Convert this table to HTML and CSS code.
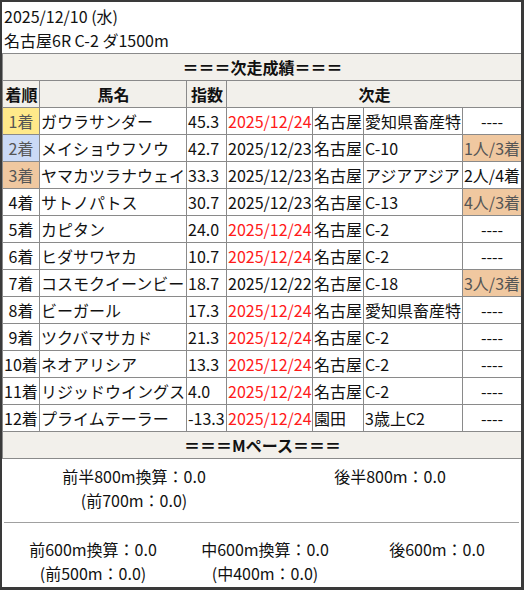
FILE: index.html
```html
<!DOCTYPE html>
<html lang="ja">
<head>
<meta charset="utf-8">
<link rel="stylesheet" href="styles.css">
</head>
<body>
<div class="frame">
  <div class="title">
    <div>2025/12/10 (水)</div>
    <div>名古屋6R C-2 ダ1500m</div>
  </div>
  <table class="res">
    <colgroup>
      <col class="c1"><col class="c2"><col class="c3"><col class="c4"><col class="c5"><col class="c6"><col class="c7">
    </colgroup>
    <tr class="sec"><th colspan="7">＝＝＝次走成績＝＝＝</th></tr>
    <tr class="hd"><th>着順</th><th>馬名</th><th>指数</th><th colspan="4">次走</th></tr>
    <tr><td class="rk p1">1着</td><td>ガウラサンダー</td><td>45.3</td><td class="red">2025/12/24</td><td>名古屋</td><td>愛知県畜産特</td><td class="rs">----</td></tr>
    <tr><td class="rk p2">2着</td><td>メイショウフソウ</td><td>42.7</td><td>2025/12/23</td><td>名古屋</td><td>C-10</td><td class="rs p3">1人/3着</td></tr>
    <tr><td class="rk p3">3着</td><td>ヤマカツラナウェイ</td><td>33.3</td><td>2025/12/23</td><td>名古屋</td><td>アジアアジア</td><td class="rs">2人/4着</td></tr>
    <tr><td class="rk">4着</td><td>サトノパトス</td><td>30.7</td><td>2025/12/23</td><td>名古屋</td><td>C-13</td><td class="rs p3">4人/3着</td></tr>
    <tr><td class="rk">5着</td><td>カピタン</td><td>24.0</td><td class="red">2025/12/24</td><td>名古屋</td><td>C-2</td><td class="rs">----</td></tr>
    <tr><td class="rk">6着</td><td>ヒダサワヤカ</td><td>10.7</td><td class="red">2025/12/24</td><td>名古屋</td><td>C-2</td><td class="rs">----</td></tr>
    <tr><td class="rk">7着</td><td>コスモクイーンビー</td><td>18.7</td><td>2025/12/22</td><td>名古屋</td><td>C-18</td><td class="rs p3">3人/3着</td></tr>
    <tr><td class="rk">8着</td><td>ビーガール</td><td>17.3</td><td class="red">2025/12/24</td><td>名古屋</td><td>愛知県畜産特</td><td class="rs">----</td></tr>
    <tr><td class="rk">9着</td><td>ツクバマサカド</td><td>21.3</td><td class="red">2025/12/24</td><td>名古屋</td><td>C-2</td><td class="rs">----</td></tr>
    <tr><td class="rk">10着</td><td>ネオアリシア</td><td>13.3</td><td class="red">2025/12/24</td><td>名古屋</td><td>C-2</td><td class="rs">----</td></tr>
    <tr><td class="rk">11着</td><td>リジッドウイングス</td><td>4.0</td><td class="red">2025/12/24</td><td>名古屋</td><td>C-2</td><td class="rs">----</td></tr>
    <tr><td class="rk">12着</td><td>プライムテーラー</td><td>-13.3</td><td class="red">2025/12/24</td><td>園田</td><td>3歳上C2</td><td class="rs">----</td></tr>
    <tr class="sec"><th colspan="7">＝＝＝Mペース＝＝＝</th></tr>
  </table>
  <div class="pace">
    <div class="two">
      <div>前半800m換算：0.0<br>(前700m：0.0)</div>
      <div>後半800m：0.0</div>
    </div>
    <div class="rule"></div>
    <div class="three">
      <div>前600m換算：0.0<br>(前500m：0.0)</div>
      <div>中600m換算：0.0<br>(中400m：0.0)</div>
      <div>後600m：0.0</div>
    </div>
  </div>
</div>
</body>
</html>
```
FILE: styles.css
```css
html {
  background: #3a3a3a;
}
body {
  margin: 0;
  font-family: "Noto Sans CJK JP", "Noto Sans", sans-serif;
  font-size: 16px;
  color: #111;
}
.frame {
  margin: 2px 3px 0 2px;
  width: 519px;
  height: 585px;
  background: #fff;
  overflow: hidden;
}
.title {
  padding: 2px 0 1px 2px;
  line-height: 24px;
}
.res {
  border-collapse: collapse;
  table-layout: fixed;
  width: 519px;
}
.c1 { width: 37px; }
.c2 { width: 147px; }
.c3 { width: 40px; }
.c4 { width: 86px; }
.c5 { width: 51px; }
.c6 { width: 99px; }
.c7 { width: 59px; }
.res th, .res td {
  border: 1px solid #8a8a8a;
  padding: 0 0 0 1px;
  height: 26px;
  line-height: 26px;
  white-space: nowrap;
  overflow: hidden;
  text-align: left;
}
.res th {
  font-weight: bold;
  text-align: center;
}
.sec th {
  background: #f2f0eb;
}
.hd th {
  background: #f2f0eb;
}
.res td.rk {
  text-align: center;
  padding: 0;
}
.res td.rs {
  text-align: center;
  padding: 0;
}
.red {
  color: #ff1a1a;
}
.p1 { background: #ffe98a; color: #555; }
.p2 { background: #cbdaf6; color: #555; }
.p3 { background: #f0c8a0; color: #555; }
.pace {
  line-height: 24px;
}
.two {
  display: grid;
  grid-template-columns: 256px 256px;
  padding: 5px 0 0 4px;
  height: 58px;
  text-align: center;
}
.rule {
  height: 1px;
  margin: 0 2px;
  background: #a0a0a0;
}
.three {
  display: grid;
  grid-template-columns: 172px 172px 172px;
  padding: 14px 0 0 5px;
  text-align: center;
}
```
